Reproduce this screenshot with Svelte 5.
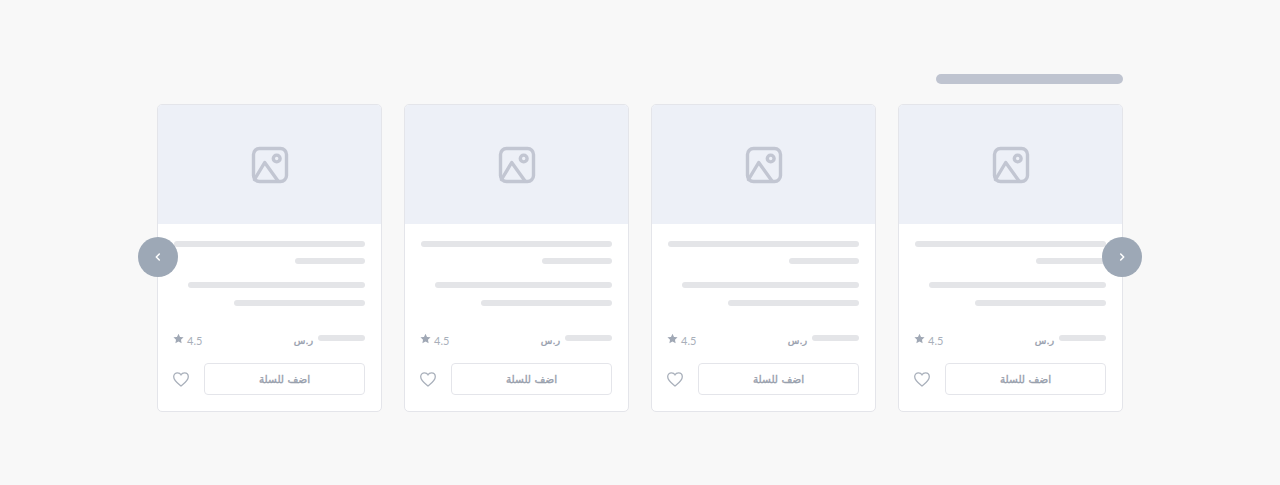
<script lang="ts">
	const cards = [1, 2, 3, 4];
</script>

<main class="page" dir="rtl">
	<div class="section">
		<div class="title-bar"></div>

		<div class="carousel">
			<div class="track">
				{#each cards as card (card)}
					<article class="card">
						<div class="thumb">
							<svg width="38" height="38" viewBox="0 0 38 38" fill="none" stroke="#c2c6d2" stroke-width="3.400" stroke-linejoin="round" stroke-linecap="round">
								<rect x="2.500" y="2.500" width="33" height="33" rx="6" />
								<circle cx="25.700" cy="12.500" r="3.400" />
								<path d="M3.500 33.500 L13.700 16.500 L27 35" />
							</svg>
						</div>
						<div class="body">
							<div class="lines">
								<span class="line w191"></span>
								<span class="line w70"></span>
							</div>
							<div class="lines second">
								<span class="line w177"></span>
								<span class="line w131"></span>
							</div>
							<div class="meta">
								<div class="price">
									<span class="line w47"></span>
									<span class="currency">ر.س</span>
								</div>
								<div class="rating">
									<span class="score">4.5</span>
									<svg width="11" height="11" viewBox="0 0 24 24" fill="#a0a8b5">
										<path d="M12 1.500l3.300 7 7.700 1-5.600 5.300 1.400 7.700-6.800-3.700-6.800 3.700 1.400-7.700L1 9.500l7.700-1z" />
									</svg>
								</div>
							</div>
							<div class="actions">
								<button type="button" class="add">اضف للسلة</button>
								<svg class="heart" width="16" height="15" viewBox="0 0 16 15" fill="none" stroke="#a9b0bb" stroke-width="1.300">
									<path d="M8 14C5.500 12 .7 8.800 .7 4.800 .7 2.400 2.400 .8 4.500 .8 6 .8 7.300 1.500 8 2.800 8.700 1.500 10 .8 11.500 .8 13.600 .8 15.300 2.400 15.300 4.800 15.300 8.800 10.500 12 8 14z" />
								</svg>
							</div>
						</div>
					</article>
				{/each}
			</div>

			<button type="button" class="arrow next" aria-label="next">
				<svg width="8" height="10" viewBox="0 0 8 10" fill="none" stroke="#fff" stroke-width="1.500" stroke-linecap="round" stroke-linejoin="round">
					<path d="M2.700 2L5.700 5 2.700 8" />
				</svg>
			</button>
			<button type="button" class="arrow prev" aria-label="previous">
				<svg width="8" height="10" viewBox="0 0 8 10" fill="none" stroke="#fff" stroke-width="1.500" stroke-linecap="round" stroke-linejoin="round">
					<path d="M5.300 2L2.300 5 5.300 8" />
				</svg>
			</button>
		</div>
	</div>
</main>

<style>
	:global(body) {
		margin: 0;
		background: #f8f8f8;
	}

	.page {
		height: 485px;
		padding-top: 74px;
		box-sizing: border-box;
		font-family: Lato, "DejaVu Sans", sans-serif;
	}

	.section {
		width: 966px;
		margin: 0 auto;
	}

	.title-bar {
		width: 187px;
		height: 10px;
		border-radius: 5px;
		background: #bfc4d0;
		margin-bottom: 20px;
	}

	.carousel {
		position: relative;
	}

	.track {
		display: flex;
		gap: 22px;
	}

	.card {
		width: 225px;
		height: 308px;
		box-sizing: border-box;
		border: 1px solid #e4e5ea;
		border-radius: 5px;
		background: #fff;
		overflow: hidden;
	}

	.thumb {
		height: 119px;
		background: #edf0f7;
		display: flex;
		align-items: center;
		justify-content: center;
	}

	.body {
		padding: 17px 16px 0 15px;
	}

	.lines {
		display: flex;
		flex-direction: column;
		gap: 11px;
	}

	.second {
		margin-top: 18px;
		gap: 12px;
	}

	.line {
		display: block;
		height: 6px;
		border-radius: 3px;
		background: #e4e5e8;
	}

	.w191 { width: 191px; }
	.w177 { width: 177px; }
	.w131 { width: 131px; }
	.w70 { width: 70px; }
	.w47 { width: 47px; }

	.meta {
		display: flex;
		justify-content: space-between;
		align-items: flex-start;
		margin-top: 29px;
		height: 28px;
	}

	.price {
		display: flex;
		gap: 5px;
		align-items: flex-start;
	}

	.currency {
		font: 400 9.500px/11px "DejaVu Sans", sans-serif;
		color: #98a0ad;
		-webkit-text-stroke: 0.35px #98a0ad;
	}

	.rating {
		display: flex;
		align-items: flex-start;
		gap: 3px;
		margin-top: -2px;
	}

	.score {
		font-size: 11px;
		line-height: 13px;
		color: #a9afba;
		margin-top: 1px;
	}

	.actions {
		display: flex;
		justify-content: space-between;
		align-items: center;
	}

	.add {
		width: 161px;
		height: 32px;
		box-sizing: border-box;
		border: 1px solid #e4e5ea;
		border-radius: 4px;
		background: #fff;
		font: 400 10.500px "DejaVu Sans", sans-serif;
		color: #98a0ad;
		-webkit-text-stroke: 0.35px #98a0ad;
		padding: 0;
	}

	.arrow {
		position: absolute;
		top: 133px;
		width: 40px;
		height: 40px;
		padding: 0;
		border: 0;
		border-radius: 50%;
		background: #9da8b6;
		display: flex;
		align-items: center;
		justify-content: center;
	}

	.next {
		right: -19px;
	}

	.prev {
		left: -19px;
	}
</style>
